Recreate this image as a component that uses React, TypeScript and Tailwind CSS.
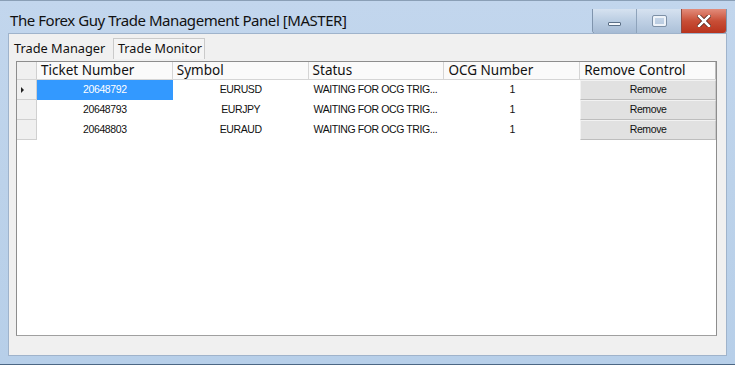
import React from "react";

const rows = [
  { ticket: "20648792", symbol: "EURUSD", status: "WAITING FOR OCG TRIG...", ocg: "1", selected: true },
  { ticket: "20648793", symbol: "EURJPY", status: "WAITING FOR OCG TRIG...", ocg: "1", selected: false },
  { ticket: "20648803", symbol: "EURAUD", status: "WAITING FOR OCG TRIG...", ocg: "1", selected: false },
];

const uiFont = { fontFamily: '"Noto Sans", "Open Sans", sans-serif' };
const cellFont = { fontFamily: '"Liberation Sans", Arial, sans-serif' };

export default function App() {
  return (
    <div className="w-[735px] h-[365px] overflow-hidden bg-[#fff]">
      <div className="w-[735px] h-[365px] flex flex-col bg-gradient-to-b from-[#c2d6ed] via-[#bcd2ea] to-[#b7cfe9] border-t border-[#8a9fb6] border-b border-b-[#4c6784]">
        {/* Title bar */}
        <div className="h-[32px] flex items-start shrink-0">
          <div className="pl-[10px] pt-[8px] text-[15px] leading-[22px] text-[#111] tracking-[-0.45px]" style={uiFont}>
            The Forex Guy Trade Management Panel [MASTER]
          </div>
          <div className="ml-auto mr-[8px] mt-[8px] flex h-[25px] rounded-b-[4px] border border-t-0 border-[#7f94ad] overflow-hidden shadow-[0_1px_0_#e6eef8]">
            <div className="w-[44px] h-full bg-gradient-to-b from-[#d6e2f0] via-[#bacde2] to-[#a6bbd4] border-r border-[#8ea3bb] flex items-center justify-center">
              <div className="w-[13px] h-[4px] mt-[6px] bg-[#f4f7fb] border border-[#5b6f86] rounded-[1px]" />
            </div>
            <div className="w-[45px] h-full bg-gradient-to-b from-[#d6e2f0] via-[#bfd0e4] to-[#abc0d8] border-r border-[#8e4a40] flex items-center justify-center">
              <div className="w-[13px] h-[10px] border-[2px] border-[#eef3f9] outline outline-1 outline-[#7d90a6] rounded-[1px]" />
            </div>
            <div className="w-[44px] h-full bg-gradient-to-b from-[#e28c7b] via-[#c84e36] to-[#b8321c] flex items-center justify-center">
              <svg width="14" height="12" viewBox="0 0 14 12">
                <path d="M2 1 L12 11 M12 1 L2 11" stroke="#4a1a10" strokeWidth="4" strokeLinecap="square" />
                <path d="M2 1 L12 11 M12 1 L2 11" stroke="#ffffff" strokeWidth="2.6" strokeLinecap="square" />
              </svg>
            </div>
          </div>
        </div>

        {/* Client area */}
        <div className="mx-[8px] h-[323px] bg-[#f0f0f0] border border-[#9fb3cb] flex flex-col">
          {/* Tabs */}
          <div className="flex items-end h-[25px] pl-[3px]" style={uiFont}>
            <div className="w-[101px] h-[21px] pl-[2px] text-[12.8px] leading-[20px] text-[#111] whitespace-nowrap">Trade Manager</div>
            <div className="w-[92px] h-[21px] pl-[4px] text-[12.6px] leading-[20px] text-[#111] bg-[#f4f4f4] border border-b-0 border-[#cacaca] whitespace-nowrap overflow-hidden">
              Trade Monitor
            </div>
          </div>

          {/* Grid */}
          <div className="ml-[7px] mt-[2px] w-[701px] h-[275px] bg-white border border-[#8d8d8d] border-b-[#a0a0a0] flex flex-col">
            {/* Header */}
            <div className="flex h-[18px] border-b border-[#d5d5d5] bg-[#fafafa]" style={uiFont}>
              <div className="w-[20px] h-full bg-[#f0f0f0] border-r border-[#d0d0d0]" />
              {["Ticket Number", "Symbol", "Status", "OCG Number", "Remove Control"].map((h, i) => (
                <div
                  key={h}
                  className={`w-[136px] h-full pl-[4px] text-[13.5px] leading-[17px] text-[#111] whitespace-nowrap overflow-hidden ${
                    i < 4 ? "border-r border-[#d5d5d5]" : "border-r border-[#bdbdbd]"
                  }`}
                >
                  {h}
                </div>
              ))}
            </div>
            {/* Rows */}
            {rows.map((r) => (
              <div key={r.ticket} className="flex h-[20px] text-[10.5px] tracking-[-0.4px] text-[#111]" style={cellFont}>
                <div className="w-[20px] h-full bg-[#f0f0f0] border-r border-b border-[#d0d0d0] flex items-center pl-[4px]">
                  {r.selected && (
                    <svg width="4" height="6" viewBox="0 0 4 6">
                      <path d="M0 0 L3 3 L0 6 Z" fill="#222" />
                    </svg>
                  )}
                </div>
                <div
                  className={`w-[136px] h-full flex items-center justify-center ${
                    r.selected ? "bg-[#3399ff] text-white" : ""
                  }`}
                >
                  {r.ticket}
                </div>
                <div className="w-[136px] h-full flex items-center justify-center">{r.symbol}</div>
                <div className="w-[136px] h-full flex items-center pl-[5px] whitespace-nowrap">{r.status}</div>
                <div className="w-[136px] h-full flex items-center justify-center">{r.ocg}</div>
                <div className="w-[136px] h-full p-0">
                  <div className="h-full bg-[#e1e1e1] border border-[#c8c8c8] border-t-[#f2f2f2] border-l-[#f2f2f2] border-b-[#bdbdbd] flex items-center justify-center">
                    Remove
                  </div>
                </div>
              </div>
            ))}
          </div>
        </div>
      </div>
    </div>
  );
}
